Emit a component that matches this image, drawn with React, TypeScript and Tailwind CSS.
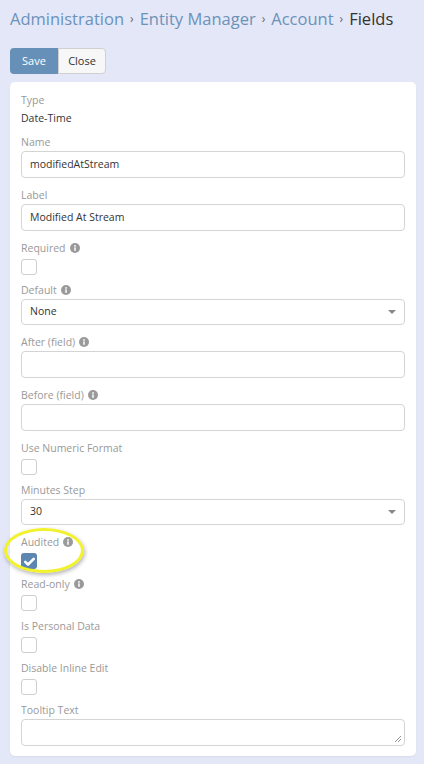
import React from 'react';

const Info = () => (
  <svg viewBox="0 0 16 16" className="ml-[4px] inline-block h-[10px] w-[10px]">
    <circle cx="8" cy="8" r="8" fill="#9a9a9a" />
    <rect x="6.8" y="7" width="2.4" height="5.5" fill="#fff" />
    <circle cx="8" cy="4.6" r="1.4" fill="#fff" />
  </svg>
);

const Label = ({ text, info }: { text: string; info?: boolean }) => (
  <div className="flex h-[18px] items-center text-[10.5px] leading-[18px] text-[#999]">
    {text}
    {info && <Info />}
  </div>
);

const TextField = ({ label, value, info }: { label: string; value?: string; info?: boolean }) => (
  <div className="mb-[8px]">
    <Label text={label} info={info} />
    <div className="flex h-[27px] items-center rounded-[4px] border border-[#d4d4d4] bg-white px-[8px] text-[10.5px] text-[#333]">
      {value}
    </div>
  </div>
);

const SelectField = ({ label, value, info }: { label: string; value: string; info?: boolean }) => (
  <div className="mb-[8px]">
    <Label text={label} info={info} />
    <div className="flex h-[26px] items-center justify-between rounded-[4px] border border-[#d4d4d4] bg-white px-[8px] text-[10.5px] text-[#333]">
      <span>{value}</span>
      <span className="h-0 w-0 border-x-[4px] border-t-[4px] border-x-transparent border-t-[#888]" />
    </div>
  </div>
);

const CheckField = ({ label, info, checked }: { label: string; info?: boolean; checked?: boolean }) => (
  <div className="mb-[6px]">
    <Label text={label} info={info} />
    {checked ? (
      <div className="mt-[2px] flex h-[16px] w-[16px] items-center justify-center rounded-[3px] bg-[#5d86b0]">
        <svg viewBox="0 0 16 16" className="h-[13px] w-[13px]">
          <path d="M2.8 8.4l3.4 3.3 7-7" fill="none" stroke="#fff" strokeWidth="3.2" strokeLinecap="round" strokeLinejoin="round" />
        </svg>
      </div>
    ) : (
      <div className="mt-[2px] h-[16px] w-[16px] rounded-[3px] border border-[#cfcfcf] bg-white" />
    )}
  </div>
);

export default function App() {
  return (
    <div
      className="min-h-[764px] bg-[#e3e7f8] pt-[6px]"
      style={{ fontFamily: '"Open Sans", "Liberation Sans", sans-serif' }}
    >
      <div className="mb-[16px] flex h-[26px] items-center gap-[6px] whitespace-nowrap pl-[10px] text-[16.5px] leading-[26px] text-[#6c92b9]">
        <span>Administration</span>
        <span className="text-[12px] text-[#666]">›</span>
        <span>Entity Manager</span>
        <span className="text-[12px] text-[#666]">›</span>
        <span>Account</span>
        <span className="text-[12px] text-[#666]">›</span>
        <span className="text-[#333]">Fields</span>
      </div>

      <div className="mb-[8px] flex pl-[10px]">
        <button className="h-[26px] w-[48px] rounded-l-[4px] bg-[#6690b8] text-[11px] text-white">Save</button>
        <button className="h-[26px] w-[48px] rounded-r-[4px] border border-[#d0d0d0] bg-[#f7f7f7] text-[11px] text-[#333]">
          Close
        </button>
      </div>

      <div className="ml-[10px] w-[406px] rounded-[5px] bg-white px-[11px] pb-[4px] pt-[9px] shadow-[0_1px_2px_rgba(0,0,0,0.06)]">
        <div className="mb-[6px]">
          <div className="text-[10.5px] leading-[18px] text-[#999]">Type</div>
          <div className="text-[10.5px] leading-[18px] text-[#333]">Date-Time</div>
        </div>
        <TextField label="Name" value="modifiedAtStream" />
        <TextField label="Label" value="Modified At Stream" />
        <CheckField label="Required" info />
        <SelectField label="Default" value="None" info />
        <TextField label="After (field)" info />
        <TextField label="Before (field)" info />
        <CheckField label="Use Numeric Format" />
        <SelectField label="Minutes Step" value="30" />
        <div className="relative">
          <CheckField label="Audited" info checked />
          <div className="pointer-events-none absolute left-[-17px] top-[-5px] h-[45px] w-[80px] rounded-[50%] border-[3px] border-[#f2f22c] shadow-[1px_2px_4px_rgba(0,0,0,0.3)]" />
        </div>
        <CheckField label="Read-only" info />
        <CheckField label="Is Personal Data" />
        <CheckField label="Disable Inline Edit" />
        <div className="mb-[6px]">
          <Label text="Tooltip Text" />
          <div className="relative h-[27px] rounded-[4px] border border-[#d4d4d4] bg-white">
            <svg viewBox="0 0 8 8" className="absolute bottom-[2px] right-[2px] h-[8px] w-[8px]">
              <path d="M1 7L7 1M4 7L7 4" stroke="#777" strokeWidth="0.8" />
            </svg>
          </div>
        </div>
      </div>
    </div>
  );
}
